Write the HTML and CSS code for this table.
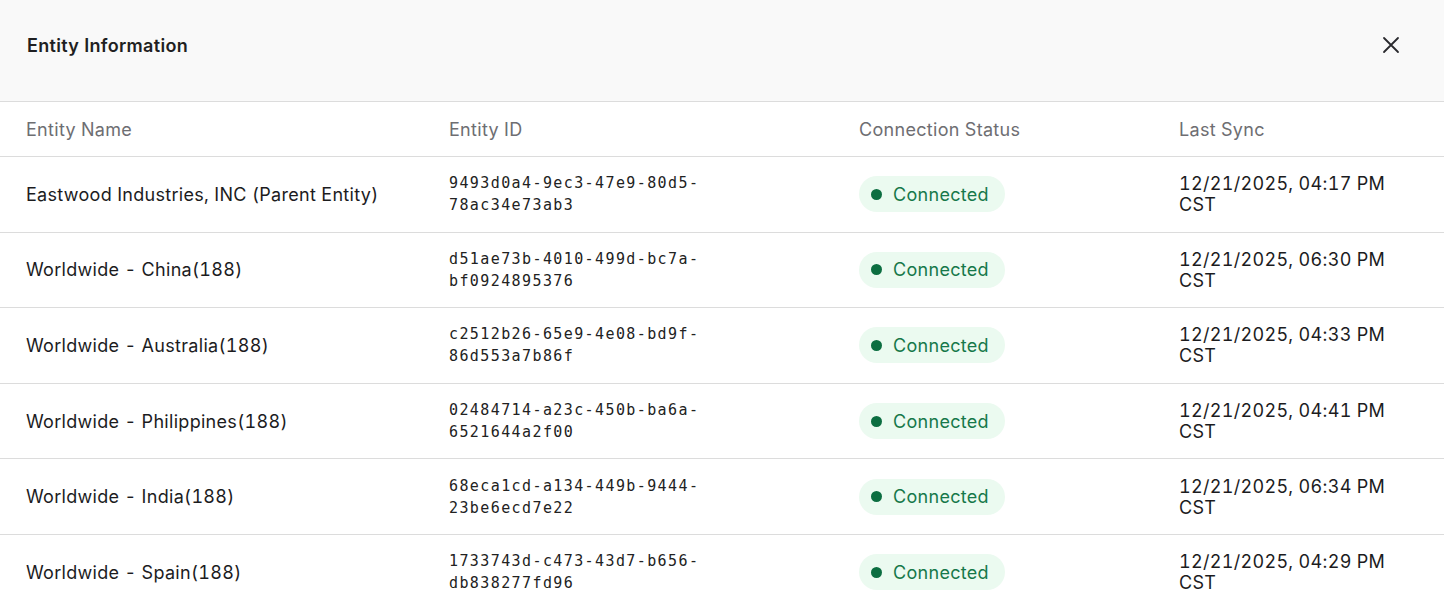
FILE: index.html
```html
<!DOCTYPE html>
<html lang="en">
<head>
  <meta charset="UTF-8" />
  <meta name="viewport" content="width=device-width, initial-scale=1.0" />
  <title>Entity Information</title>
  <link rel="stylesheet" href="styles.css">
</head>
<body>
  <div class="modal">
    <header class="modal-header">
      <h2>Entity Information</h2>
      <button class="close-btn" aria-label="Close">
        <svg width="18" height="18" viewBox="0 0 18 18" fill="none" stroke="#2a2a2e" stroke-width="1.8" stroke-linecap="round">
          <path d="M2 2L16 16M16 2L2 16" />
        </svg>
      </button>
    </header>
    <table class="entities">
      <colgroup>
        <col class="c-name">
        <col class="c-id">
        <col class="c-status">
        <col class="c-sync">
      </colgroup>
      <thead>
        <tr>
          <th>Entity Name</th>
          <th>Entity ID</th>
          <th>Connection Status</th>
          <th>Last Sync</th>
        </tr>
      </thead>
      <tbody>
        <tr>
          <td>Eastwood Industries, INC (Parent Entity)</td>
          <td class="mono">9493d0a4-9ec3-47e9-80d5-<br>78ac34e73ab3</td>
          <td><span class="badge"><i></i>Connected</span></td>
          <td class="sync">12/21/2025, 04:17 PM<br>CST</td>
        </tr>
        <tr>
          <td>Worldwide - China(188)</td>
          <td class="mono">d51ae73b-4010-499d-bc7a-<br>bf0924895376</td>
          <td><span class="badge"><i></i>Connected</span></td>
          <td class="sync">12/21/2025, 06:30 PM<br>CST</td>
        </tr>
        <tr>
          <td>Worldwide - Australia(188)</td>
          <td class="mono">c2512b26-65e9-4e08-bd9f-<br>86d553a7b86f</td>
          <td><span class="badge"><i></i>Connected</span></td>
          <td class="sync">12/21/2025, 04:33 PM<br>CST</td>
        </tr>
        <tr>
          <td>Worldwide - Philippines(188)</td>
          <td class="mono">02484714-a23c-450b-ba6a-<br>6521644a2f00</td>
          <td><span class="badge"><i></i>Connected</span></td>
          <td class="sync">12/21/2025, 04:41 PM<br>CST</td>
        </tr>
        <tr>
          <td>Worldwide - India(188)</td>
          <td class="mono">68eca1cd-a134-449b-9444-<br>23be6ecd7e22</td>
          <td><span class="badge"><i></i>Connected</span></td>
          <td class="sync">12/21/2025, 06:34 PM<br>CST</td>
        </tr>
        <tr>
          <td>Worldwide - Spain(188)</td>
          <td class="mono">1733743d-c473-43d7-b656-<br>db838277fd96</td>
          <td><span class="badge"><i></i>Connected</span></td>
          <td class="sync">12/21/2025, 04:29 PM<br>CST</td>
        </tr>
      </tbody>
    </table>
  </div>
</body>
</html>
```

FILE: styles.css
```css
body {
  margin: 0;
  font-family: Inter, 'Noto Sans', sans-serif;
  background: #fff;
  color: #1c1c1e;
  letter-spacing: 0.3px;
  font-variant-numeric: tabular-nums;
}
.modal {
  width: 100%;
  overflow: hidden;
}
.modal-header {
  display: flex;
  align-items: center;
  justify-content: space-between;
  height: 102px;
  padding: 0 44px 11px 27px;
  box-sizing: border-box;
  background: #f9f9f9;
  border-bottom: 1px solid #dcdcdc;
}
.modal-header h2 {
  margin: 0;
  font-size: 18px;
  font-weight: 600;
  color: #1f1f22;
}
.close-btn {
  background: none;
  border: none;
  padding: 0;
  display: flex;
  cursor: pointer;
}
.entities {
  width: 100%;
  border-collapse: collapse;
  table-layout: fixed;
}
.c-name { width: 449px; }
.c-id { width: 410px; }
.c-status { width: 320px; }
th, td {
  text-align: left;
  padding: 0;
  border-bottom: 1px solid #dcdcdc;
  vertical-align: middle;
}
th:first-child, td:first-child {
  padding-left: 26px;
}
th {
  height: 54px;
  font-size: 18px;
  font-weight: 400;
  color: #6e6e72;
}
td {
  height: 74.6px;
  font-size: 18px;
  line-height: 21px;
  color: #1c1c1e;
}
td.mono {
  font-family: 'DejaVu Sans Mono', 'Liberation Mono', monospace;
  font-size: 15px;
  line-height: 22px;
  letter-spacing: 1.4px;
  color: #222;
}
.badge {
  display: inline-flex;
  align-items: center;
  gap: 11px;
  height: 36px;
  padding: 0 16px 0 12px;
  border-radius: 18px;
  background: #ebfaf0;
  color: #16784a;
  font-size: 18px;
}
.badge i {
  width: 11px;
  height: 11px;
  border-radius: 50%;
  background: #0c6e41;
}
```
